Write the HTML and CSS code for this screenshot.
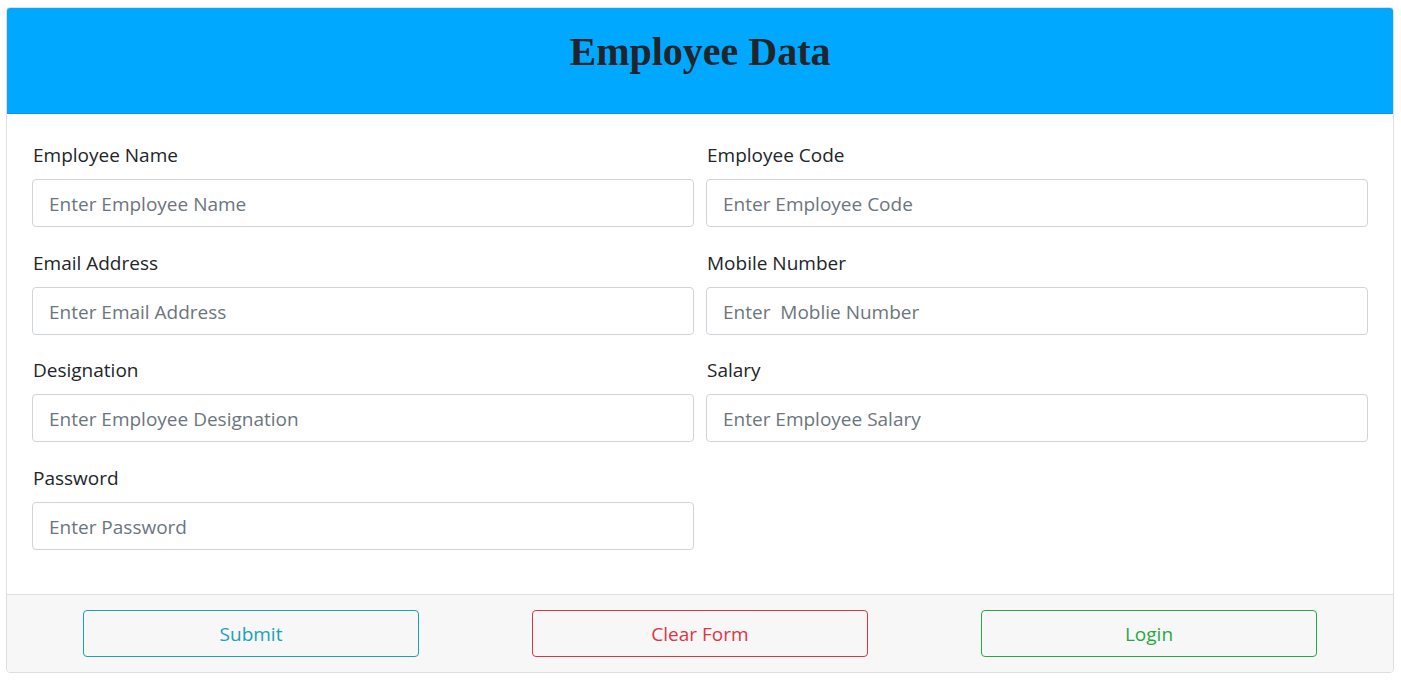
FILE: index.html
```html
<!DOCTYPE html>
<html lang="en">
<head>
<meta charset="utf-8">
<title>Employee Data</title>
<link rel="stylesheet" href="styles.css">
</head>
<body>
<div class="page">
  <form class="card">
    <div class="card-header">
      <h1 class="title">Employee Data</h1>
    </div>
    <div class="card-body">
      <div class="field">
        <label class="label">Employee Name</label>
        <input class="input" type="text" placeholder="Enter Employee Name">
      </div>
      <div class="field">
        <label class="label">Employee Code</label>
        <input class="input" type="text" placeholder="Enter Employee Code">
      </div>
      <div class="field">
        <label class="label">Email Address</label>
        <input class="input" type="text" placeholder="Enter Email Address">
      </div>
      <div class="field">
        <label class="label">Mobile Number</label>
        <input class="input" type="text" placeholder="Enter&nbsp; Moblie Number">
      </div>
      <div class="field">
        <label class="label">Designation</label>
        <input class="input" type="text" placeholder="Enter Employee Designation">
      </div>
      <div class="field">
        <label class="label">Salary</label>
        <input class="input" type="text" placeholder="Enter Employee Salary">
      </div>
      <div class="field">
        <label class="label">Password</label>
        <input class="input" type="password" placeholder="Enter Password">
      </div>
    </div>
    <div class="card-footer">
      <div class="btn-col"><button type="button" class="btn btn-info">Submit</button></div>
      <div class="btn-col"><button type="button" class="btn btn-danger">Clear Form</button></div>
      <div class="btn-col"><button type="button" class="btn btn-success">Login</button></div>
    </div>
  </form>
</div>
</body>
</html>
```
FILE: styles.css
```css
* { box-sizing: border-box; }
html, body { margin: 0; padding: 0; background: #fff; }
body {
  font-family: "Open Sans", "Noto Sans", "Liberation Sans", sans-serif;
  color: #212529;
}
.page { padding: 7px 7px 0 6px; }
.card {
  display: flex;
  flex-direction: column;
  border: 1px solid #dfdfdf;
  border-radius: 4px;
  overflow: hidden;
  background: #fff;
}
.card-header {
  background: #00a8ff;
  border-bottom: 1px solid #0a96d8;
  height: 106px;
  display: flex;
  align-items: center;
  justify-content: center;
  padding-bottom: 17px;
}
.title {
  margin: 0;
  font-family: "Liberation Serif", "Times New Roman", serif;
  font-weight: bold;
  font-size: 40px;
  color: #212529;
  line-height: 1.2;
}
.card-body {
  display: grid;
  grid-template-columns: 1fr 1fr;
  column-gap: 12px;
  row-gap: 21.5px;
  padding: 27px 25px 44px 25px;
}
.field { display: flex; flex-direction: column; }
.label {
  font-size: 19px;
  line-height: 28px;
  margin-bottom: 10px;
  padding-left: 1px;
}
.input {
  height: 48px;
  border: 1px solid #ced4da;
  border-radius: 4px;
  padding: 2px 16px 0;
  font-family: inherit;
  font-size: 19px;
  color: #495057;
  background: #fff;
}
.input::placeholder { color: #6c757d; opacity: 1; }
.card-footer {
  background: #f7f7f7;
  border-top: 1px solid #dfdfdf;
  display: grid;
  grid-template-columns: repeat(3, 1fr);
  padding: 15px 19.5px 15px 19.5px;
}
.btn-col { display: flex; justify-content: center; }
.btn {
  width: 75%;
  height: 47px;
  background: transparent;
  border: 1px solid;
  border-radius: 4px;
  font-family: inherit;
  font-size: 19px;
  padding-top: 2px;
}
.btn-info { color: #17a2b8; border-color: #17a2b8; }
.btn-danger { color: #dc3545; border-color: #dc3545; }
.btn-success { color: #28a745; border-color: #28a745; }
```
